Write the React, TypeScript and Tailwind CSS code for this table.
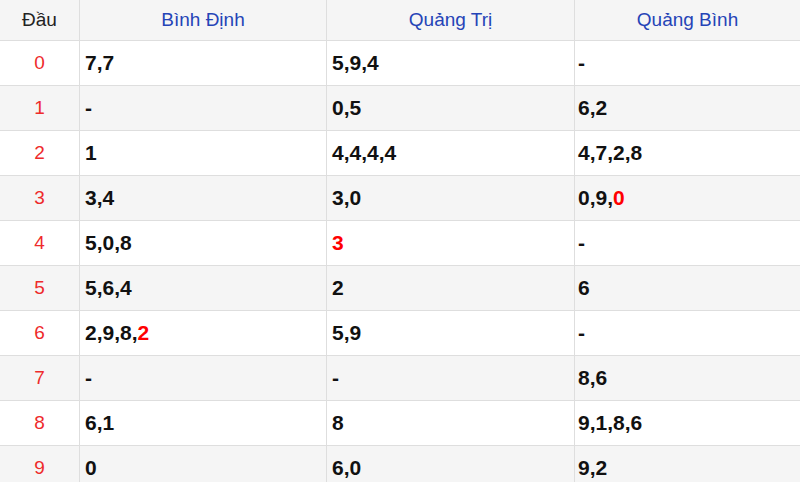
import React from "react";

type Part = { t: string; red?: boolean };
const rows: { d: string; c: Part[][] }[] = [
  { d: "0", c: [[{ t: "7,7" }], [{ t: "5,9,4" }], [{ t: "-" }]] },
  { d: "1", c: [[{ t: "-" }], [{ t: "0,5" }], [{ t: "6,2" }]] },
  { d: "2", c: [[{ t: "1" }], [{ t: "4,4,4,4" }], [{ t: "4,7,2,8" }]] },
  { d: "3", c: [[{ t: "3,4" }], [{ t: "3,0" }], [{ t: "0,9," }, { t: "0", red: true }]] },
  { d: "4", c: [[{ t: "5,0,8" }], [{ t: "3", red: true }], [{ t: "-" }]] },
  { d: "5", c: [[{ t: "5,6,4" }], [{ t: "2" }], [{ t: "6" }]] },
  { d: "6", c: [[{ t: "2,9,8," }, { t: "2", red: true }], [{ t: "5,9" }], [{ t: "-" }]] },
  { d: "7", c: [[{ t: "-" }], [{ t: "-" }], [{ t: "8,6" }]] },
  { d: "8", c: [[{ t: "6,1" }], [{ t: "8" }], [{ t: "9,1,8,6" }]] },
  { d: "9", c: [[{ t: "0" }], [{ t: "6,0" }], [{ t: "9,2" }]] },
];

const heads = ["Bình Định", "Quảng Trị", "Quảng Bình"];

export default function App() {
  return (
    <div
      className="w-[800px] h-[482px] overflow-hidden bg-white"
      style={{ fontFamily: '"Liberation Sans", Arial, sans-serif' }}
    >
      <div className="grid grid-cols-[80px_247px_248px_225px]">
        <div className="h-[41px] flex items-center justify-center bg-[#f5f5f5] border-b border-r border-[#dedede] text-[19px] text-[#222]">
          Đầu
        </div>
        {heads.map((h, i) => (
          <div
            key={h}
            className={`h-[41px] flex items-center justify-center bg-[#f5f5f5] border-b border-[#dedede] text-[19px] text-[#2544b7] ${i < 2 ? "border-r" : ""}`}
          >
            {h}
          </div>
        ))}
        {rows.map((r, ri) => {
          const bg = ri % 2 === 1 ? "bg-[#f5f5f5]" : "bg-white";
          return (
            <React.Fragment key={r.d}>
              <div
                className={`h-[45px] flex items-center justify-center border-b border-r border-[#dedede] text-[19px] text-[#ee2b2b] ${bg}`}
              >
                {r.d}
              </div>
              {r.c.map((cell, ci) => (
                <div
                  key={ci}
                  className={`h-[45px] flex items-center border-b border-[#dedede] text-[21px] font-bold text-[#111] ${bg} ${ci < 2 ? "border-r pl-[5px]" : "pl-[3px]"}`}
                >
                  {cell.map((p, pi) => (
                    <span key={pi} className={p.red ? "text-[#ff0000]" : ""}>
                      {p.t}
                    </span>
                  ))}
                </div>
              ))}
            </React.Fragment>
          );
        })}
      </div>
    </div>
  );
}
